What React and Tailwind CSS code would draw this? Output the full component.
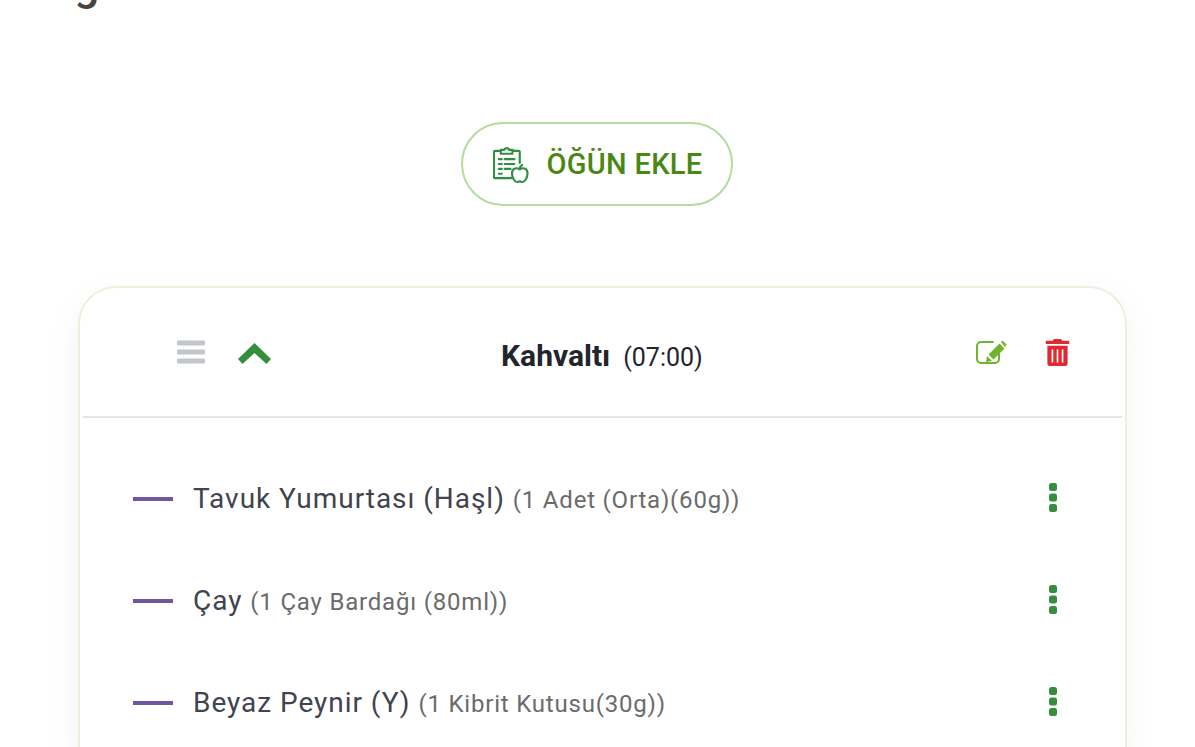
import React from "react";
import { FaTrashAlt } from "react-icons/fa";

function MealIcon() {
  return (
    <svg width="36" height="39" viewBox="0 0 37 39" fill="none" stroke="#2f8f3f" strokeWidth="2.200" strokeLinecap="round" strokeLinejoin="round" className="shrink-0">
      <path d="M19 33.500H2a1 1 0 0 1-1-1V6.500a1 1 0 0 1 1-1h6" />
      <path d="M19 5.500h7.500a1 1 0 0 1 1 1V18" />
      <path d="M8 8.500V4.500h3.500a2.600 2.600 0 0 1 5 0H20v4z" fill="#ffffff" />
      <path d="M6 14h3M12 14h10M6 19h3M12 19h10M6 24h3M12 24h6M6 29h3" />
      <path d="M27.500 24.500c-2.500-2-8-1.500-8 4 0 4.500 2.700 9 5.300 9 1 0 1.700-.6 2.700-.6s1.700.6 2.700.6c2.600 0 5.300-4.500 5.300-9 0-5.500-5.500-6-8-4z" fill="#ffffff" />
      <path d="M27.500 24c0-1.800.7-3 2.500-4" />
    </svg>
  );
}

function Bars() {
  return (
    <svg width="28" height="24" viewBox="0 0 28 24" fill="#c2c5cd" className="shrink-0">
      <rect x="0" y="0.500" width="28" height="5" rx="1" />
      <rect x="0" y="9.500" width="28" height="5" rx="1" />
      <rect x="0" y="18.500" width="28" height="5" rx="1" />
    </svg>
  );
}

function Chevron() {
  return (
    <svg width="33" height="21" viewBox="0 0 33 21" fill="#358e3b" className="shrink-0">
      <path d="M16.500 0 33 16l-4.500 5-12-11-12 11L0 16z" />
    </svg>
  );
}

function Dots() {
  return (
    <svg width="8" height="29" viewBox="0 0 8 29" fill="#358e3b" className="shrink-0">
      <rect x="0" y="0" width="8" height="8" rx="2.500" />
      <rect x="0" y="10.500" width="8" height="8" rx="2.500" />
      <rect x="0" y="21" width="8" height="8" rx="2.500" />
    </svg>
  );
}

function EditIcon() {
  return (
    <svg width="31" height="25" viewBox="0 0 31 25" className="shrink-0">
      <path d="M17 2H5a4 4 0 0 0-4 4v13a4 4 0 0 0 4 4h14a4 4 0 0 0 4-4v-6" fill="none" stroke="#6fb52c" strokeWidth="2" strokeLinecap="round" />
      <path d="M12.500 14.500 23.500 3.500 28.500 8.500 17.500 19.500z M10 22l1-6 5 5z M25 2l1.500-1.500 4 4L29 7z" fill="#6fb52c" />
    </svg>
  );
}

function Row({ name, detail }) {
  return (
    <div className="flex h-[102px] items-center pl-[50px] pr-[65px]">
      <span className="h-[4px] w-10 shrink-0 bg-[#6f56a3]" />
      <p className="ml-5 flex-1 text-[#3f4450]">
        <span className="text-[28px] tracking-[0.96px]">{name}</span>{" "}
        <span className="ml-1 text-[24px] tracking-[0.8px] text-[#6b6b6b]">{detail}</span>
      </p>
      <div className="-translate-y-[2px]">
        <Dots />
      </div>
    </div>
  );
}

export default function App() {
  return (
    <div className="h-[747px] w-[1195px] overflow-hidden bg-white font-['Roboto',sans-serif]">
      <h1 className="mt-[-38px] pl-[44px] text-[44px] font-medium leading-[46px] text-[#444444]">Öğün Listesi</h1>
      <div className="mt-[114px] flex justify-center pr-[2px]">
        <button className="flex h-[84px] w-[272px] items-center justify-center gap-[18px] rounded-full border-2 border-[#b5dc9a] bg-white pl-[2px]">
          <MealIcon />
          <span className="pt-[2px] text-[29px] font-medium tracking-[0.3px] text-[#4a8715]">ÖĞÜN EKLE</span>
        </button>
      </div>
      <section className="ml-[78px] mr-[68px] mt-[80px] rounded-t-[38px] border-2 border-b-0 border-[#e8f2dc] px-[3px] shadow-[0_12px_36px_rgba(0,0,0,0.05)]">
        <header className="flex h-[130px] items-center border-b-2 border-[#e5e5e5] pl-[94px] pr-[51px]">
          <Bars />
          <div className="ml-[33px] translate-y-[1px]"><Chevron /></div>
          <p className="flex-1 pl-[230px] pt-[6px] text-[#22252e]">
            <span className="text-[30px] font-bold">Kahvaltı</span>
            <span className="ml-[13px] text-[25px]">(07:00)</span>
          </p>
          <EditIcon />
          <FaTrashAlt className="ml-[37px] text-[27px] text-[#e02a30]" />
        </header>
        <div className="pt-[30px]">
          <Row name="Tavuk Yumurtası (Haşl)" detail="(1 Adet (Orta)(60g))" />
          <Row name="Çay" detail="(1 Çay Bardağı (80ml))" />
          <Row name="Beyaz Peynir (Y)" detail="(1 Kibrit Kutusu(30g))" />
        </div>
      </section>
    </div>
  );
}
